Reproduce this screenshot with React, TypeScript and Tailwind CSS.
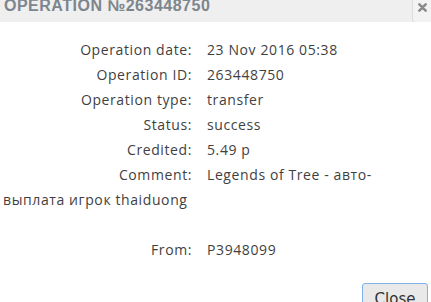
export default function App() {
  const rows: [string, string][] = [
    ["Operation date:", "23 Nov 2016 05:38"],
    ["Operation ID:", "263448750"],
    ["Operation type:", "transfer"],
    ["Status:", "success"],
    ["Credited:", "5.49 р"],
  ];

  return (
    <div className="w-[431px] h-[302px] overflow-hidden bg-white relative">
      {/* Title bar */}
      <div className="h-[22px] bg-[#efefef] overflow-hidden relative">
        <div className="mt-[-3px] ml-[4px] text-[16px] leading-[18px] font-bold tracking-[0.5px] text-[#7d858d] font-['Liberation_Sans',sans-serif]">
          OPERATION №263448750
        </div>
        <button className="absolute right-[-6px] top-[-4px] w-[25px] h-[27px] bg-[#f3f3f3] border border-[#dcdcdc] rounded-[4px] flex items-start justify-center pr-[5px] pt-[6px]">
          <svg width="9" height="9" viewBox="0 0 10 10">
            <path d="M1.5 1.5 L8.5 8.5 M8.5 1.5 L1.5 8.5" stroke="#8a8a8a" strokeWidth="2.8" strokeLinecap="round" />
          </svg>
        </button>
      </div>

      {/* Details */}
      <div className="pt-[15px] pl-[3px] w-[400px] text-[14px] leading-[25px] tracking-[0.6px] text-[#3f3f3f] font-['Open_Sans',sans-serif]">
        {rows.map(([label, value]) => (
          <div key={label}>
            <span className="inline-block w-[189px] text-right mr-[15px]">{label}</span>
            {value}
          </div>
        ))}
        <div>
          <span className="inline-block w-[189px] text-right mr-[15px]">Comment:</span>
          Legends of Tree - авто-выплата игрок thaiduong
        </div>
        <div className="h-[25px]" />
        <div>
          <span className="inline-block w-[189px] text-right mr-[15px]">From:</span>
          P3948099
        </div>
      </div>

      {/* Footer button */}
      <button className="absolute left-[362px] top-[283px] w-[66px] h-[28px] rounded-[3px] border border-[#7fb2ea] bg-[#e9e9e9] text-[15px] leading-[26px] text-[#333] font-['DejaVu_Sans',sans-serif] pt-[2px]">
        Close
      </button>
    </div>
  );
}
